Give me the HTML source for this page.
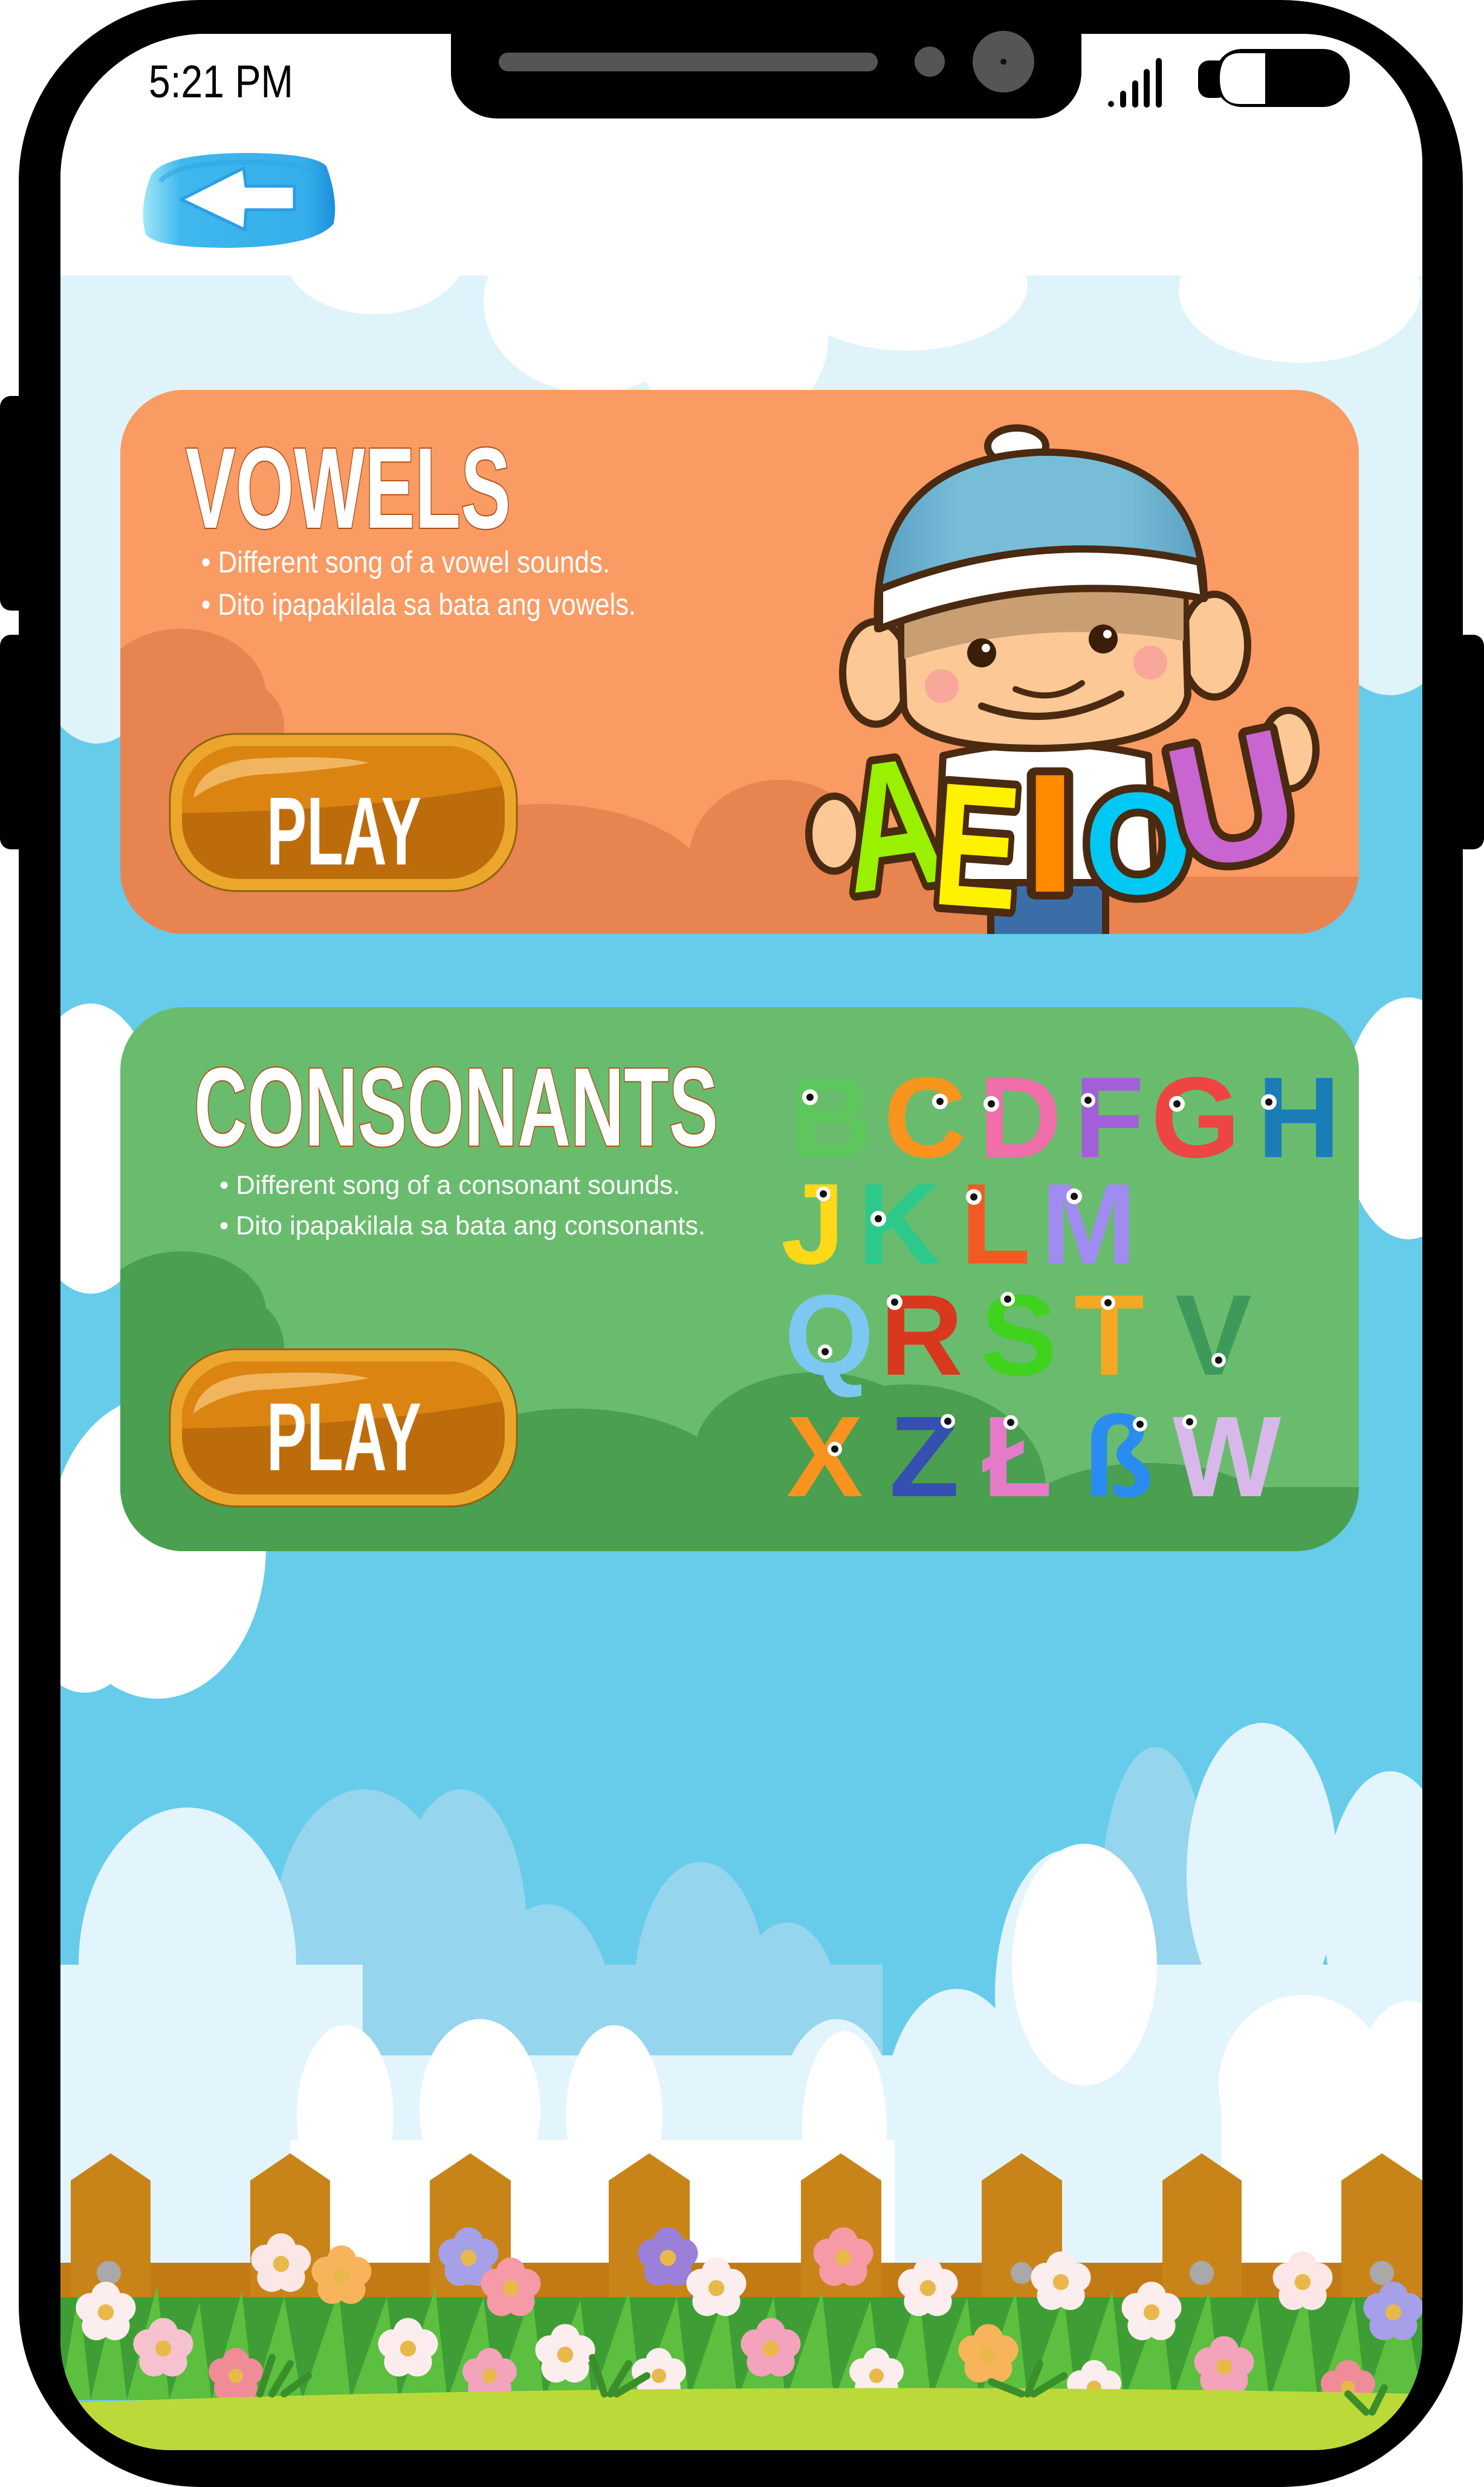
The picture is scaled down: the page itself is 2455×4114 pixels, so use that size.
<!DOCTYPE html>
<html><head><meta charset="utf-8"><style>
html,body{margin:0;padding:0;background:#fff;}
svg{display:block}
</style></head><body>
<svg width="2455" height="4114" viewBox="0 0 2455 4114" xmlns="http://www.w3.org/2000/svg">
<defs>
<clipPath id="scr"><path d="M300 56 H2153 A200 215 0 0 1 2353 271 V3873 A180 180 0 0 1 2173 4053 H280 A180 180 0 0 1 100 3873 V296 A240 240 0 0 1 340 56 Z"/></clipPath>
<clipPath id="c1"><rect x="199" y="645" width="2049" height="900" rx="105"/></clipPath>
<clipPath id="c1b"><rect x="199" y="600" width="2049" height="945"/></clipPath>
<clipPath id="c2"><rect x="199" y="1666" width="2049" height="900" rx="105"/></clipPath>
<linearGradient id="gem" x1="0" y1="0" x2="1" y2="0"><stop offset="0" stop-color="#9FE6F6"/><stop offset="0.2" stop-color="#3EB8EE"/><stop offset="0.85" stop-color="#35AEEA"/><stop offset="1" stop-color="#1C8FDC"/></linearGradient>
<linearGradient id="cap" x1="0" y1="0" x2="1" y2="0"><stop offset="0" stop-color="#5A9FC2"/><stop offset="0.25" stop-color="#78BDD8"/><stop offset="0.75" stop-color="#78BDD8"/><stop offset="1" stop-color="#5A9FC2"/></linearGradient>
<symbol id="fl" viewBox="-50 -50 100 100">
<g><circle cx="0" cy="-24" r="22"/><circle cx="23" cy="-7" r="22"/><circle cx="14" cy="20" r="22"/><circle cx="-14" cy="20" r="22"/><circle cx="-23" cy="-7" r="22"/></g>
<circle r="12" fill="#E8B94A"/>
</symbol>
</defs>

<rect x="0" y="655" width="50" height="355" rx="18" fill="#000"/>
<rect x="0" y="1050" width="50" height="355" rx="18" fill="#000"/>
<rect x="2405" y="1050" width="50" height="355" rx="18" fill="#000"/>
<rect x="31" y="0" width="2389" height="4114" rx="300" fill="#000"/>

<g clip-path="url(#scr)">
<rect x="100" y="56" width="2253" height="4000" fill="#66CCEA"/>
<rect x="100" y="56" width="2253" height="1000" fill="#DFF3FB"/>
<ellipse cx="160" cy="1050" rx="110" ry="180" fill="#DFF3FB"/>
<ellipse cx="2300" cy="1000" rx="110" ry="150" fill="#DFF3FB"/>
<ellipse cx="1300" cy="1060" rx="400" ry="120" fill="#DFF3FB"/>
<rect x="100" y="56" width="2253" height="400" fill="#fff"/>
<ellipse cx="620" cy="420" rx="150" ry="100" fill="#fff"/>
<ellipse cx="980" cy="500" rx="180" ry="150" fill="#fff"/>
<ellipse cx="1210" cy="560" rx="160" ry="150" fill="#fff"/>
<ellipse cx="1500" cy="470" rx="200" ry="110" fill="#fff"/>
<ellipse cx="2150" cy="480" rx="200" ry="120" fill="#fff"/>
<ellipse cx="150" cy="1900" rx="120" ry="240" fill="#fff"/>
<ellipse cx="2330" cy="1850" rx="110" ry="200" fill="#fff"/>
<ellipse cx="260" cy="2560" rx="180" ry="250" fill="#fff"/>
<ellipse cx="140" cy="2680" rx="90" ry="120" fill="#fff"/>

<g fill="#96D5EE">
<ellipse cx="603" cy="3200" rx="150" ry="240"/>
<ellipse cx="762" cy="3200" rx="110" ry="240"/>
<ellipse cx="905" cy="3350" rx="110" ry="200"/>
<ellipse cx="1159" cy="3300" rx="110" ry="220"/>
<ellipse cx="1302" cy="3350" rx="90" ry="170"/>
<ellipse cx="1911" cy="3150" rx="90" ry="260"/>
<rect x="460" y="3250" width="1000" height="200"/>
</g>
<g fill="#E2F5FC">
<ellipse cx="310" cy="3250" rx="180" ry="260"/>
<ellipse cx="2088" cy="3100" rx="125" ry="250"/>
<ellipse cx="2300" cy="3170" rx="110" ry="240"/>
<ellipse cx="1766" cy="3300" rx="120" ry="240"/>
<ellipse cx="1582" cy="3500" rx="120" ry="210"/>
<ellipse cx="1384" cy="3520" rx="100" ry="180"/>
<rect x="1650" y="3250" width="703" height="500"/>
<rect x="100" y="3250" width="500" height="500"/>
<rect x="100" y="3400" width="2253" height="480"/>
</g>
<g fill="#fff">
<ellipse cx="571" cy="3500" rx="80" ry="150"/>
<ellipse cx="794" cy="3490" rx="100" ry="150"/>
<ellipse cx="1016" cy="3500" rx="80" ry="150"/>
<ellipse cx="1397" cy="3520" rx="70" ry="160"/>
<ellipse cx="1794" cy="3250" rx="120" ry="200"/>
<ellipse cx="2156" cy="3450" rx="140" ry="150"/>
<ellipse cx="2332" cy="3460" rx="90" ry="150"/>
<rect x="480" y="3540" width="1000" height="320"/>
<rect x="2020" y="3450" width="333" height="400"/>
</g>

<rect x="100" y="3743" width="2253" height="75" fill="#C27A14"/>
<g fill="#C98419">
<polygon points="117,3607 183,3562 249,3607 249,3860 117,3860"/>
<polygon points="414,3607 480,3562 546,3607 546,3860 414,3860"/>
<polygon points="711,3607 778,3562 845,3607 845,3860 711,3860"/>
<polygon points="1007,3607 1074,3562 1141,3607 1141,3860 1007,3860"/>
<polygon points="1325,3607 1391,3562 1458,3607 1458,3860 1325,3860"/>
<polygon points="1624,3607 1690,3562 1757,3607 1757,3860 1624,3860"/>
<polygon points="1923,3607 1988,3562 2054,3607 2054,3860 1923,3860"/>
<polygon points="2219,3607 2286,3562 2353,3607 2353,3860 2219,3860"/>
</g>
<g fill="#A9A9A9">
<circle cx="180" cy="3760" r="20"/><circle cx="777" cy="3760" r="20"/><circle cx="1690" cy="3760" r="18"/><circle cx="1988" cy="3760" r="20"/><circle cx="2286" cy="3760" r="20"/>
</g>
<rect x="100" y="3800" width="2253" height="170" fill="#3E9E35"/>
<g fill="#5CBF3F">
<path d="M100 3970 L130 3790 L150 3970 L190 3800 L210 3970 L260 3780 L280 3970 L330 3810 L350 3970 L400 3790 L420 3970 L470 3800 L500 3970 L560 3790 L580 3970 L640 3800 L660 3970 L720 3785 L740 3970 L800 3800 L820 3970 L880 3790 L900 3970 L960 3805 L980 3970 L1040 3790 L1060 3970 L1120 3800 L1140 3970 L1200 3790 L1220 3970 L1280 3800 L1300 3970 L1360 3790 L1380 3970 L1440 3805 L1460 3970 L1520 3790 L1540 3970 L1600 3800 L1620 3970 L1680 3790 L1700 3970 L1760 3800 L1780 3970 L1840 3790 L1860 3970 L1920 3805 L1940 3970 L2000 3790 L2020 3970 L2080 3800 L2100 3970 L2160 3790 L2180 3970 L2240 3800 L2260 3970 L2320 3790 L2353 3970 Z"/>
</g>
<g fill="#F6C2CF">
<use href="#fl" x="215" y="3830" width="110" height="110"/>
<use href="#fl" x="410" y="3690" width="110" height="110" fill="#FCE6E6"/>
<use href="#fl" x="510" y="3710" width="110" height="110" fill="#F7B45A"/>
<use href="#fl" x="340" y="3880" width="100" height="100" fill="#F08C98"/>
<use href="#fl" x="620" y="3830" width="110" height="110" fill="#FBEDEE"/>
<use href="#fl" x="720" y="3680" width="110" height="110" fill="#A5A0E8"/>
<use href="#fl" x="790" y="3730" width="110" height="110" fill="#F59AA6"/>
<use href="#fl" x="760" y="3880" width="100" height="100" fill="#F3A3BC"/>
<use href="#fl" x="880" y="3840" width="110" height="110" fill="#FCEDEF"/>
<use href="#fl" x="1050" y="3680" width="110" height="110" fill="#9B80DA"/>
<use href="#fl" x="1130" y="3730" width="110" height="110" fill="#FCEDEE"/>
<use href="#fl" x="1040" y="3880" width="100" height="100" fill="#FCEDEE"/>
<use href="#fl" x="1220" y="3830" width="110" height="110" fill="#F3A3BC"/>
<use href="#fl" x="1340" y="3680" width="110" height="110" fill="#F59AA6"/>
<use href="#fl" x="1400" y="3880" width="100" height="100" fill="#FCEDEE"/>
<use href="#fl" x="1480" y="3730" width="110" height="110" fill="#FCEDEE"/>
<use href="#fl" x="1580" y="3840" width="110" height="110" fill="#F7B45A"/>
<use href="#fl" x="1700" y="3720" width="110" height="110" fill="#FCEDEE"/>
<use href="#fl" x="1760" y="3900" width="100" height="100" fill="#FCEDEE"/>
<use href="#fl" x="1850" y="3770" width="110" height="110" fill="#FCEDEE"/>
<use href="#fl" x="1970" y="3860" width="110" height="110" fill="#F3A3BC"/>
<use href="#fl" x="2100" y="3720" width="110" height="110" fill="#FCE6E6"/>
<use href="#fl" x="2180" y="3900" width="100" height="100" fill="#F08C98"/>
<use href="#fl" x="2250" y="3770" width="110" height="110" fill="#A5A0E8"/>
<use href="#fl" x="120" y="3770" width="110" height="110" fill="#FCEDEE"/>
</g>
<path d="M100 3975 Q1200 3935 2353 3960 V4060 H100 Z" fill="#BCD93A"/>
<path d="M430 3960 l20 -60 M450 3960 l30 -50 M470 3960 l40 -30 M1000 3960 l-20 -60 M1010 3960 l30 -50 M1020 3960 l50 -30 M1690 3960 l-50 -20 M1700 3960 l20 -50 M1710 3960 l50 -30 M2260 3990 l-30 -30 M2270 3990 l20 -40" stroke="#3A8F2B" stroke-width="12" stroke-linecap="round"/>
</g>

<path d="M746 0 H1789 V120 A76 76 0 0 1 1713 196 H822 A76 76 0 0 1 746 120 Z" fill="#000"/>
<rect x="825" y="87" width="627" height="31" rx="15.5" fill="#555"/>
<circle cx="1538" cy="102" r="25" fill="#555"/>
<circle cx="1660" cy="102" r="51" fill="#555"/>
<circle cx="1660" cy="102" r="5" fill="#111"/>

<text x="246" y="161" font-family="Liberation Sans Narrow, Liberation Sans, sans-serif" font-size="76" textLength="239" lengthAdjust="spacingAndGlyphs" fill="#000">5:21 PM</text>
<circle cx="1838" cy="172" r="5" fill="#000"/>
<rect x="1853" y="150" width="10" height="28" rx="5" fill="#000"/>
<rect x="1873" y="133" width="10" height="45" rx="5" fill="#000"/>
<rect x="1892" y="114" width="10" height="64" rx="5" fill="#000"/>
<rect x="1912" y="96" width="10" height="82" rx="5" fill="#000"/>
<rect x="1982" y="100" width="50" height="62" rx="18" fill="#000"/>
<rect x="2010" y="81" width="223" height="96" rx="44" fill="#000"/>
<path d="M2093 88 H2050 Q2018 88 2018 130 Q2018 172 2050 172 H2093 Z" fill="#fff"/>

<path d="M250 290 Q270 255 400 253 Q520 253 540 275 Q560 330 552 370 Q520 408 380 410 Q250 410 240 385 Q230 340 250 290 Z" fill="url(#gem)"/>
<path d="M265 300 Q290 270 400 268 Q510 268 525 290" stroke="#2FA6E4" stroke-width="8" fill="none" opacity="0.6"/>
<path d="M300 330 L403 278 L407 308 L487 308 L487 347 L407 347 L405 380 Z" fill="#fff" stroke="#2A9FE6" stroke-width="5" stroke-linejoin="round"/>

<!-- VOWELS CARD -->
<g clip-path="url(#c1)">
<rect x="199" y="645" width="2049" height="900" fill="#F99B63"/>
<g fill="#E8844F">
<ellipse cx="300" cy="1150" rx="140" ry="110"/>
<ellipse cx="380" cy="1200" rx="90" ry="80"/>
<rect x="199" y="1150" width="200" height="400"/>
<ellipse cx="900" cy="1480" rx="280" ry="150"/>
<ellipse cx="1290" cy="1420" rx="150" ry="130"/>
<ellipse cx="1600" cy="1520" rx="400" ry="120"/>
<ellipse cx="2020" cy="1530" rx="200" ry="80"/>
<rect x="199" y="1450" width="2049" height="100"/>
</g>
</g>
<text x="307" y="873" font-family="Liberation Sans Narrow, Liberation Sans, sans-serif" font-weight="bold" font-size="190" textLength="538" lengthAdjust="spacingAndGlyphs" fill="#fff" stroke="#B0501C" stroke-width="4" paint-order="stroke">VOWELS</text>
<g font-family="Liberation Sans Narrow, Liberation Sans, sans-serif" font-size="50" fill="#fff">
<text x="333" y="947" textLength="676" lengthAdjust="spacingAndGlyphs">• Different song of a vowel sounds.</text>
<text x="333" y="1017" textLength="719" lengthAdjust="spacingAndGlyphs">• Dito ipapakilala sa bata ang vowels.</text>
</g>
<g>
<rect x="281" y="1214" width="574" height="260" rx="110" fill="#EDA62C" stroke="#8C6412" stroke-width="3"/>
<rect x="301" y="1234" width="534" height="220" rx="95" fill="#BD6C0C"/>
<path d="M301 1340 V1320 A95 95 0 0 1 396 1234 H740 A95 95 0 0 1 830 1300 Q620 1340 301 1345 Z" fill="#DC8412"/>
<path d="M320 1320 Q330 1262 420 1255 Q560 1248 610 1262 Q540 1275 420 1282 Q360 1290 320 1320 Z" fill="#F1B560"/>
<text x="441" y="1430" font-family="Liberation Sans Narrow, Liberation Sans, sans-serif" font-weight="bold" font-size="160" textLength="256" lengthAdjust="spacingAndGlyphs" fill="#fff">PLAY</text>
</g>

<!-- boy -->
<g clip-path="url(#c1b)">
<g stroke="#4A2A10" stroke-width="12" stroke-linejoin="round">
<rect x="1639" y="1440" width="190" height="140" fill="#3B6EA8"/>
<path d="M1560 1250 Q1730 1210 1900 1250 L1910 1460 L1550 1460 Z" fill="#fff"/>
<ellipse cx="1449" cy="1113" rx="55" ry="85" fill="#FBC896"/>
<ellipse cx="2009" cy="1068" rx="55" ry="85" fill="#FBC896"/>
<path d="M1489 1000 Q1720 940 1960 980 L1965 1150 Q1950 1235 1720 1238 Q1510 1238 1495 1170 Z" fill="#FBC896"/>
<path d="M1496 1010 Q1720 960 1958 990 L1958 1060 Q1720 1020 1496 1090 Z" fill="#C99E73" stroke="none"/>
<ellipse cx="1682" cy="738" rx="48" ry="30" fill="#fff"/>
<path d="M1452 1040 Q1440 760 1720 748 Q1990 745 1992 990 Q1720 935 1452 1040 Z" fill="url(#cap)"/>
<path d="M1455 1040 Q1720 940 1992 990 L1985 930 Q1720 870 1455 975 Z" fill="#fff"/>
</g>
</g>
<circle cx="1624" cy="1080" r="24" fill="#3A1E0A"/><circle cx="1631" cy="1072" r="7" fill="#fff"/>
<circle cx="1825" cy="1057" r="24" fill="#3A1E0A"/><circle cx="1832" cy="1049" r="7" fill="#fff"/>
<circle cx="1558" cy="1135" r="28" fill="#F9A79A"/>
<circle cx="1903" cy="1096" r="28" fill="#F9A79A"/>
<path d="M1680 1140 Q1740 1165 1790 1130" stroke="#4A2A10" stroke-width="10" fill="none" stroke-linecap="round"/>
<path d="M1624 1168 Q1740 1210 1854 1148" stroke="#4A2A10" stroke-width="12" fill="none" stroke-linecap="round"/>
<ellipse cx="1380" cy="1379" rx="42" ry="62" fill="#FBC896" stroke="#4A2A10" stroke-width="12"/>
<ellipse cx="2132" cy="1240" rx="45" ry="65" fill="#FBC896" stroke="#4A2A10" stroke-width="12"/>
<g font-family="Liberation Sans, sans-serif" font-weight="bold" stroke="#4A2A10" stroke-width="26" paint-order="stroke" stroke-linejoin="round">
<text x="1392" y="1468" font-size="300" textLength="165" lengthAdjust="spacingAndGlyphs" fill="#99F000" transform="rotate(-8 1470 1350)">A</text>
<text x="1547" y="1500" font-size="290" textLength="140" lengthAdjust="spacingAndGlyphs" fill="#FFF200" transform="rotate(4 1620 1390)">E</text>
<text x="1692" y="1475" font-size="280" textLength="90" lengthAdjust="spacingAndGlyphs" fill="#FF8A00">I</text>
<text x="1794" y="1478" font-size="240" textLength="178" lengthAdjust="spacingAndGlyphs" fill="#00C8F5">O</text>
<text x="1931" y="1424" font-size="290" textLength="205" lengthAdjust="spacingAndGlyphs" fill="#C965D0" transform="rotate(-12 2030 1300)">U</text>
</g>

<!-- CONSONANTS CARD -->
<g clip-path="url(#c2)">
<rect x="199" y="1666" width="2049" height="900" fill="#69BC6D"/>
<g fill="#4B9F50">
<ellipse cx="300" cy="2170" rx="140" ry="100"/>
<ellipse cx="380" cy="2230" rx="90" ry="90"/>
<rect x="199" y="2160" width="160" height="420"/>
<ellipse cx="400" cy="2450" rx="250" ry="150"/>
<ellipse cx="950" cy="2480" rx="280" ry="150"/>
<ellipse cx="1350" cy="2400" rx="200" ry="130"/>
<ellipse cx="1500" cy="2460" rx="230" ry="170"/>
<ellipse cx="1900" cy="2520" rx="220" ry="100"/>
<rect x="199" y="2460" width="2049" height="120"/>
</g>
</g>
<text x="321" y="1895" font-family="Liberation Sans Narrow, Liberation Sans, sans-serif" font-weight="bold" font-size="185" textLength="867" lengthAdjust="spacingAndGlyphs" fill="#fff" stroke="#B0501C" stroke-width="4" paint-order="stroke">CONSONANTS</text>
<g font-family="Liberation Sans, sans-serif" font-size="44" fill="#fff">
<text x="363" y="1975" textLength="762" lengthAdjust="spacingAndGlyphs">• Different song of a consonant sounds.</text>
<text x="363" y="2042" textLength="804" lengthAdjust="spacingAndGlyphs">• Dito ipapakilala sa bata ang consonants.</text>
</g>
<g>
<rect x="281" y="2232" width="574" height="260" rx="110" fill="#EDA62C" stroke="#8C6412" stroke-width="3"/>
<rect x="301" y="2252" width="534" height="220" rx="95" fill="#BD6C0C"/>
<path d="M301 2358 V2338 A95 95 0 0 1 396 2252 H740 A95 95 0 0 1 830 2318 Q620 2358 301 2363 Z" fill="#DC8412"/>
<path d="M320 2338 Q330 2280 420 2273 Q560 2266 610 2280 Q540 2293 420 2300 Q360 2308 320 2338 Z" fill="#F1B560"/>
<text x="441" y="2432" font-family="Liberation Sans Narrow, Liberation Sans, sans-serif" font-weight="bold" font-size="160" textLength="256" lengthAdjust="spacingAndGlyphs" fill="#fff">PLAY</text>
</g>

<g font-family="Liberation Sans, sans-serif" font-weight="bold" font-size="190" lengthAdjust="spacingAndGlyphs">
<text x="1307" y="1914" textLength="121" fill="#5DC75E">B</text>
<text x="1462" y="1914" textLength="127" fill="#F7941D">C</text>
<text x="1619" y="1914" textLength="128" fill="#F06EA9">D</text>
<text x="1777" y="1914" textLength="97" fill="#A260D8">F</text>
<text x="1904" y="1914" textLength="134" fill="#EE4444">G</text>
<text x="2080" y="1914" textLength="121" fill="#1A7DB8">H</text>
<text x="1292" y="2090" textLength="94" fill="#FFD81A">J</text>
<text x="1419" y="2090" textLength="125" fill="#2DC98A">K</text>
<text x="1589" y="2090" textLength="106" fill="#F15A24">L</text>
<text x="1722" y="2090" textLength="182" fill="#A08CF0">M</text>
<text x="1298" y="2274" textLength="112" fill="#7CC8F2">Q</text>
<text x="1456" y="2274" textLength="118" fill="#D7381E">R</text>
<text x="1622" y="2274" textLength="112" fill="#3FD21E">S</text>
<text x="1777" y="2274" textLength="130" fill="#F7A823">T</text>
<text x="1944" y="2274" textLength="148" fill="#3E9A5A">V</text>
<text x="1301" y="2475" textLength="146" fill="#F7931E">X</text>
<text x="1471" y="2475" textLength="121" fill="#3450B0">Z</text>
<text x="1625" y="2475" textLength="131" fill="#E57BC8">Ł</text>
<text x="1792" y="2475" textLength="115" fill="#2A8CF0">ß</text>
<text x="1940" y="2475" textLength="185" fill="#D8B8EA">W</text>
</g>
<g fill="#fff">
<circle cx="1340" cy="1815" r="13"/><circle cx="1555" cy="1822" r="13"/><circle cx="1640" cy="1826" r="13"/><circle cx="1800" cy="1820" r="12"/><circle cx="1947" cy="1826" r="13"/><circle cx="2099" cy="1823" r="13"/>
<circle cx="1362" cy="1975" r="12"/><circle cx="1453" cy="2016" r="13"/><circle cx="1611" cy="1980" r="13"/><circle cx="1777" cy="1979" r="13"/>
<circle cx="1365" cy="2236" r="12"/><circle cx="1480" cy="2154" r="13"/><circle cx="1667" cy="2149" r="12"/><circle cx="1833" cy="2155" r="12"/><circle cx="2016" cy="2250" r="12"/>
<circle cx="1381" cy="2397" r="12"/><circle cx="1568" cy="2351" r="12"/><circle cx="1672" cy="2353" r="12"/><circle cx="1886" cy="2356" r="12"/><circle cx="1968" cy="2352" r="12"/>
</g>
<g fill="#111">
<circle cx="1340" cy="1815" r="6"/><circle cx="1555" cy="1822" r="6"/><circle cx="1640" cy="1826" r="6"/><circle cx="1800" cy="1820" r="6"/><circle cx="1947" cy="1826" r="6"/><circle cx="2099" cy="1823" r="6"/>
<circle cx="1362" cy="1975" r="6"/><circle cx="1453" cy="2016" r="6"/><circle cx="1611" cy="1980" r="6"/><circle cx="1777" cy="1979" r="6"/>
<circle cx="1365" cy="2236" r="6"/><circle cx="1480" cy="2154" r="6"/><circle cx="1667" cy="2149" r="6"/><circle cx="1833" cy="2155" r="6"/><circle cx="2016" cy="2250" r="6"/>
<circle cx="1381" cy="2397" r="6"/><circle cx="1568" cy="2351" r="6"/><circle cx="1672" cy="2353" r="6"/><circle cx="1886" cy="2356" r="6"/><circle cx="1968" cy="2352" r="6"/>
</g>
</svg>
</body></html>
